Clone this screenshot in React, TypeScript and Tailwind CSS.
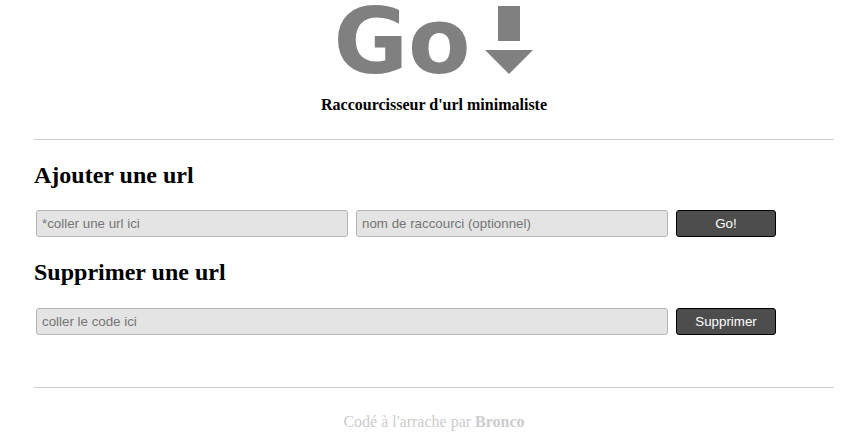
export default function App() {
  return (
    <div className="ml-[34px] w-[800px] font-['Liberation_Serif',serif] text-black">
      <header className="h-[140px] border-b border-[#cccccc] flex flex-col items-center">
        <div className="h-[84px] pr-[2px] flex items-start justify-center text-[#808080]">
          <span className="font-['DejaVu_Sans',sans-serif] font-bold text-[91px] leading-[84px]">Go</span>
          <svg width="48" height="68" viewBox="0 0 48 68" className="ml-[14px] mt-[6px] fill-[#808080]">
            <rect x="13" y="0" width="22" height="35" />
            <polygon points="0,44 48,44 24,68" />
          </svg>
        </div>
        <h2 className="mt-[10px] text-[16px] leading-[22px] font-bold">Raccourcisseur d'url minimaliste</h2>
      </header>

      <h1 className="mt-[20px] text-[24px] leading-[30px] font-bold">Ajouter une url</h1>
      <form className="mt-[20px] ml-[2px] flex gap-[8px] font-['Liberation_Sans',sans-serif]">
        <input
          placeholder="*coller une url ici"
          className="w-[312px] h-[27px] px-[5px] text-[13.33px] bg-[#e4e4e4] border border-[#b4b4b4] rounded-[3px] placeholder:text-[#757575]"
        />
        <input
          placeholder="nom de raccourci (optionnel)"
          className="w-[312px] h-[27px] px-[5px] text-[13.33px] bg-[#e4e4e4] border border-[#b4b4b4] rounded-[3px] placeholder:text-[#757575]"
        />
        <button type="button" className="w-[100px] h-[27px] text-[13.33px] text-white bg-[#4d4d4d] border border-black rounded-[3px]">
          Go!
        </button>
      </form>

      <h1 className="mt-[20px] text-[24px] leading-[30px] font-bold">Supprimer une url</h1>
      <form className="mt-[21px] ml-[2px] flex gap-[8px] font-['Liberation_Sans',sans-serif]">
        <input
          placeholder="coller le code ici"
          className="w-[632px] h-[27px] px-[5px] text-[13.33px] bg-[#e4e4e4] border border-[#b4b4b4] rounded-[3px] placeholder:text-[#757575]"
        />
        <button type="button" className="w-[100px] h-[27px] text-[13.33px] text-white bg-[#4d4d4d] border border-black rounded-[3px]">
          Supprimer
        </button>
      </form>

      <footer className="mt-[52px] border-t border-[#cccccc] pt-[24px] text-center text-[16px] leading-[20px] text-[#cccccc]">
        Codé à l'arrache par <b>Bronco</b>
      </footer>
    </div>
  );
}
